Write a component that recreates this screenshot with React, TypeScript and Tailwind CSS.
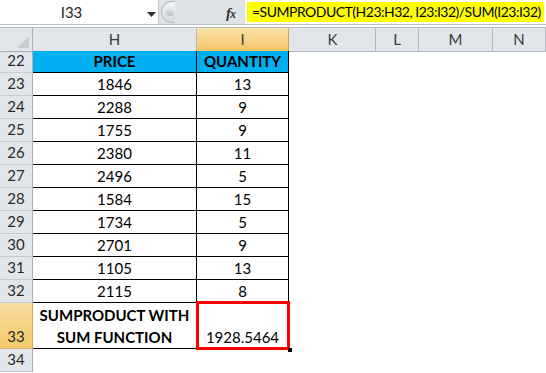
import React from 'react';

const cols = ['H', 'I', 'J', 'K', 'L', 'M', 'N'];

const data: [number, number][] = [
  [1846, 13],
  [2288, 9],
  [1755, 9],
  [2380, 11],
  [2496, 5],
  [1584, 15],
  [1734, 5],
  [2701, 9],
  [1105, 13],
  [2115, 8],
];

const grid = 'grid grid-cols-[33px_164px_92px_1px_86px_43px_74px_1fr]';

const RowHead = ({ n, active, h }: { n: number; active?: boolean; h: string }) => (
  <div
    className={`${h} flex items-end justify-center pb-[1px] border-r border-b text-[15px] text-[#2b2b2b] ${
      active
        ? 'bg-gradient-to-b from-[#f9dd9f] to-[#f3c969] border-r-[#e2a83f] border-b-[#d9b16a]'
        : 'bg-[#e2e6eb] border-r-[#a9b0b8] border-b-[#c5cbd2]'
    }`}
  >
    {n}
  </div>
);

const Empty = ({ h }: { h: string }) => <div className={`${h} col-span-5`} />;

export default function App() {
  return (
    <div className="w-[546px] h-[373px] overflow-hidden bg-white font-['Lato','Liberation_Sans',sans-serif]">
      {/* formula bar */}
      <div className="flex h-[24px] bg-[#dfe3e8]">
        <div className="relative shrink-0 w-[159px] h-[24px] bg-white border-r border-[#c3c8ce] flex items-center">
          <span className="w-[143px] text-center text-[15px] text-[#1f1f1f]">I33</span>
          <svg width="9" height="5" viewBox="0 0 9 5" className="absolute left-[147px] top-[12px]">
            <path d="M0 0h9L4.5 5z" fill="#333" />
          </svg>
        </div>
        <div className="relative shrink-0 w-[86px] flex items-center">
          <div className="ml-[2px] w-[14px] h-[22px] rounded-l-full border border-r-0 border-[#b4bac2] bg-gradient-to-b from-[#f3f5f7] to-[#d6dbe1] flex items-center justify-end pr-[1px]">
            <div className="w-[8px] h-[8px] rounded-full bg-gradient-to-b from-[#e9ecef] to-[#b9bfc6]" />
          </div>
          <span className="absolute left-[67px] top-[2px] font-['Liberation_Serif',serif] italic font-bold text-[15px] text-[#333] tracking-[-1px]">
            f<span className="text-[12px]">x</span>
          </span>
        </div>
        <div className="flex-1 min-w-0 overflow-hidden bg-white flex items-center pl-[2px]">
          <span className="bg-[#ffff00] h-[20px] leading-[20px] pl-[5px] pr-[3px] text-[14px] text-black whitespace-nowrap tracking-[-0.5px]">
            =SUMPRODUCT(H23:H32, I23:I32)/SUM(I23:I32)
          </span>
        </div>
      </div>
      <div className="h-[4px] border-t border-b border-[#b9bec5] bg-white" />

      {/* column headers */}
      <div className={`${grid} h-[23px]`}>
        <div className="relative bg-[#e2e6eb] border-r border-b border-[#a9b0b8]">
          <svg width="12" height="12" viewBox="0 0 12 12" className="absolute right-[3px] bottom-[3px]">
            <path d="M12 0V12H0z" fill="#c8ccd1" />
          </svg>
        </div>
        {cols.map((c) =>
          c === 'I' ? (
            <div
              key={c}
              className="bg-gradient-to-b from-[#fbe3a9] to-[#f2c462] border-r border-b border-[#dca246] flex items-center justify-center text-[15px] text-[#3a3a3a]"
            >
              {c}
            </div>
          ) : c === 'J' ? (
            <div key={c} className="bg-[#e2e6eb] border-b border-[#a9b0b8]" />
          ) : (
            <div
              key={c}
              className="bg-[#e2e6eb] border-r border-b border-[#b3b9c0] flex items-center justify-center text-[15px] text-[#3a3a3a]"
            >
              {c}
            </div>
          )
        )}
      </div>

      {/* header row 22 */}
      <div className={grid}>
        <RowHead n={22} h="h-[22px]" />
        <div className="h-[22px] bg-[#00b0f0] border-r border-b border-black flex items-center justify-center font-bold text-[15px] text-black">
          PRICE
        </div>
        <div className="h-[22px] bg-[#00b0f0] border-r border-b border-black flex items-center justify-center font-bold text-[15px] text-black">
          QUANTITY
        </div>
        <Empty h="h-[22px]" />
      </div>

      {data.map(([price, qty], i) => (
        <div key={i} className={grid}>
          <RowHead n={23 + i} h="h-[23px]" />
          <div className="h-[23px] border-r border-b border-black flex items-center justify-center text-[15px] text-black">
            {price}
          </div>
          <div className="h-[23px] border-r border-b border-black flex items-center justify-center text-[15px] text-black">
            {qty}
          </div>
          <Empty h="h-[23px]" />
        </div>
      ))}

      {/* row 33 */}
      <div className={grid}>
        <RowHead n={33} active h="h-[46px]" />
        <div className="h-[46px] border-r border-b border-black flex flex-col items-center justify-end font-bold text-[15px] leading-[22px] text-black">
          <span>SUMPRODUCT WITH</span>
          <span>SUM FUNCTION</span>
        </div>
        <div className="relative h-[46px] border-r border-b border-black flex items-end justify-center text-[15px] leading-[22px] text-black">
          1928.5464
          <div className="absolute -left-[1px] -top-[2px] -right-[2px] -bottom-[2px] border-[3px] border-[#ff0000]" />
          <div className="absolute -right-[4px] -bottom-[4px] w-[4px] h-[4px] bg-black" />
        </div>
        <Empty h="h-[46px]" />
      </div>

      {/* row 34 */}
      <div className={grid}>
        <RowHead n={34} h="h-[23px]" />
        <div className="h-[23px] col-span-7" />
      </div>
    </div>
  );
}
